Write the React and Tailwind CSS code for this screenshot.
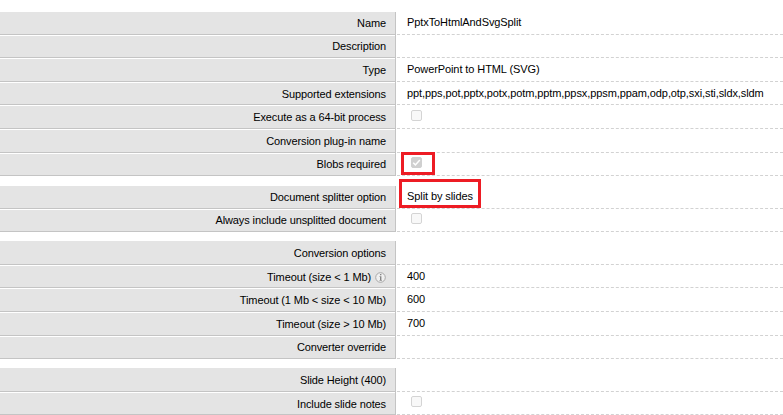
import { Fragment } from "react";

const groups = [
  {
    gap: "h-3",
    rows: [
      { label: "Name", value: "PptxToHtmlAndSvgSplit", h: "h-[23px]", first: true, raised: true },
      { label: "Description", h: "h-[23px]", raised: true },
      { label: "Type", value: "PowerPoint to HTML (SVG)", h: "h-6" },
      {
        label: "Supported extensions",
        value: "ppt,pps,pot,pptx,potx,potm,pptm,ppsx,ppsm,ppam,odp,otp,sxi,sti,sldx,sldm",
        h: "h-[23px]",
      },
      { label: "Execute as a 64-bit process", check: "off", h: "h-6" },
      { label: "Conversion plug-in name", h: "h-6" },
      { label: "Blobs required", check: "on", h: "h-[23px]", raised: true, mark: "left-[4px] -top-px w-[34px] h-[23px]" },
    ],
  },
  {
    gap: "h-[10px]",
    rows: [
      {
        label: "Document splitter option",
        value: "Split by slides",
        h: "h-[23px]",
        first: true,
        raised: true,
        mark: "left-[2px] -top-[7px] w-[82px] h-[29px]",
      },
      { label: "Always include unsplitted document", check: "off", h: "h-[23px]", raised: true },
    ],
  },
  {
    gap: "h-[9px]",
    rows: [
      { label: "Conversion options", h: "h-6", first: true },
      { label: "Timeout (size < 1 Mb)", info: true, value: "400", h: "h-[23px]" },
      { label: "Timeout (1 Mb < size < 10 Mb)", value: "600", h: "h-6" },
      { label: "Timeout (size > 10 Mb)", value: "700", h: "h-6" },
      { label: "Converter override", h: "h-[23px]", raised: true },
    ],
  },
  {
    gap: "h-[9px]",
    rows: [
      { label: "Slide Height (400)", h: "h-6", first: true },
      { label: "Include slide notes", check: "off", h: "h-[23px]" },
    ],
  },
];

function InfoIcon() {
  return (
    <svg className="relative top-px ml-1 shrink-0" width="11" height="11" viewBox="0 0 11 11">
      <circle cx="5.5" cy="5.5" r="4.8" fill="#f0f0f0" stroke="#a8a8a8" strokeWidth="1" />
      <path d="M5 2h1.4v1.3H5zM4.5 4.3h1.9v3.6h.5v.8H4.5v-.8H5V5.1h-.5z" fill="#858585" />
    </svg>
  );
}

function Checkbox({ checked }) {
  return (
    <svg className="ml-1 mb-[3px]" width="11" height="11" viewBox="0 0 11 11">
      <rect
        x="0.5"
        y="0.5"
        width="10"
        height="10"
        rx="1.5"
        fill={checked ? "#d0d0d0" : "#f8f8f8"}
        stroke={checked ? "#d0d0d0" : "#d4d4d4"}
      />
      {checked && <path d="M2.2 5.7 4.4 7.9 8.8 2.9" fill="none" stroke="#ffffff" strokeWidth="1.5" />}
    </svg>
  );
}

function Row({ row }) {
  return (
    <div className={`flex ${row.h}`}>
      <div
        className={`flex w-[396px] shrink-0 items-center justify-end border-r border-b border-[#c4c4c4] bg-[#e4e4e4] pr-[9px] tracking-[-0.11px] ${
          row.first ? "" : "shadow-[inset_0_1px_0_#ffffff]"
        }`}
      >
        <span className={row.raised ? "" : "relative top-px"}>{row.label}</span>
        {row.info && <InfoIcon />}
      </div>
      <div className="relative ml-px flex flex-1 items-center border-b border-dashed border-[#d2d2d2] pl-[10px] tracking-[-0.09px]">
        {row.value && <span className={row.raised ? "relative -top-px" : ""}>{row.value}</span>}
        {row.check && <Checkbox checked={row.check === "on"} />}
        {row.mark && <div className={`absolute z-10 border-3 border-[#ed1c24] ${row.mark}`} />}
      </div>
    </div>
  );
}

export default function App() {
  return (
    <div className="h-[415px] w-[783px] overflow-hidden bg-white font-['Liberation_Sans',Arial,sans-serif] text-[11px] leading-[13px] whitespace-nowrap text-black">
      {groups.map((group, i) => (
        <Fragment key={i}>
          <div className={group.gap} />
          {group.rows.map((row) => (
            <Row key={row.label} row={row} />
          ))}
        </Fragment>
      ))}
    </div>
  );
}
